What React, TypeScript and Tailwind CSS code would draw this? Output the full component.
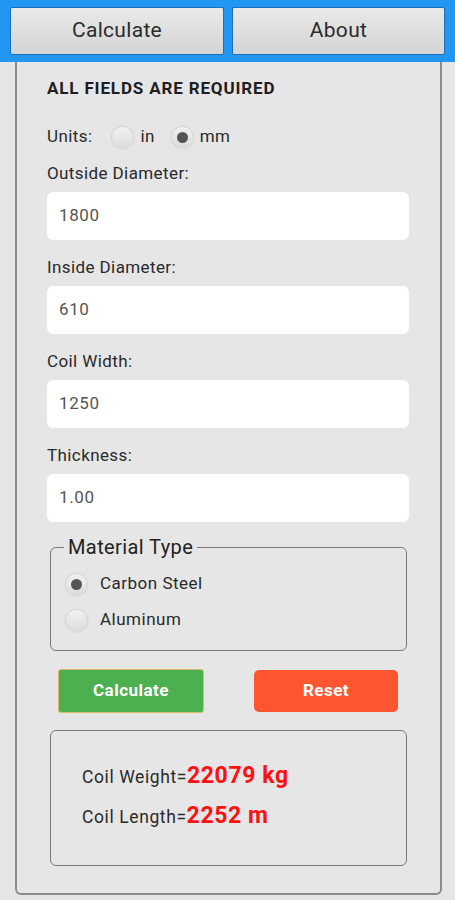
import React from "react";

function Radio({ checked }: { checked?: boolean }) {
  return (
    <span className="w-[23px] h-[23px] rounded-full bg-gradient-to-b from-[#f2f2f2] to-[#dcdcdc] border border-[#d6d6d6] shadow-[0_0_2px_rgba(0,0,0,0.08)] flex items-center justify-center shrink-0">
      {checked && <span className="w-[11px] h-[11px] rounded-full bg-[#555555]" />}
    </span>
  );
}

function Field({ label, value, first }: { label: string; value: string; first?: boolean }) {
  return (
    <div className={first ? "mt-[14px]" : "mt-[17px]"}>
      <div className="text-[17px] leading-[20px] tracking-[0.4px] text-[#2a2a2a]">{label}</div>
      <div className="mt-[9px] h-[48px] w-[362px] bg-white rounded-md flex items-center pl-[12px] text-[17px] tracking-[0.6px] text-[#555555]">
        {value}
      </div>
    </div>
  );
}

export default function App() {
  return (
    <div className="w-[455px] h-[900px] bg-[#e6e6e6] overflow-hidden font-['Roboto',sans-serif]">
      <div className="h-[62px] bg-[#2196f3] flex gap-[8px] pl-[10px] pt-[7px]">
        <div className="w-[214px] h-[48px] bg-gradient-to-b from-[#eaeaea] to-[#d4d4d4] border border-[#1c6fb8] rounded-[2px] flex items-center justify-center text-[21px] tracking-[0.3px] text-[#2b2b2b]">
          Calculate
        </div>
        <div className="w-[213px] h-[48px] bg-gradient-to-b from-[#eaeaea] to-[#d4d4d4] border border-[#1c6fb8] rounded-[2px] flex items-center justify-center text-[21px] tracking-[0.3px] text-[#2b2b2b]">
          About
        </div>
      </div>
      <div className="ml-[15px] w-[427px] h-[833px] border-x-2 border-b-2 border-[#8c8c8c] rounded-b-[6px] px-[30px] pt-[16px]">
        <div className="text-[17px] leading-[20px] font-bold tracking-[0.85px] text-[#1e1e1e] whitespace-nowrap">ALL FIELDS ARE REQUIRED</div>
        <div className="mt-[27px] h-[24px] flex items-center text-[17px] tracking-[0.4px] text-[#2a2a2a]">
          <span>Units:</span>
          <span className="ml-[19px]"><Radio /></span>
          <span className="ml-[6px]">in</span>
          <span className="ml-[16px]"><Radio checked /></span>
          <span className="ml-[6px]">mm</span>
        </div>
        <Field label="Outside Diameter:" value="1800" first />
        <Field label="Inside Diameter:" value="610" />
        <Field label="Coil Width:" value="1250" />
        <Field label="Thickness:" value="1.00" />
        <fieldset className="mt-[14px] ml-[3px] w-[357px] h-[115px] border border-[#7a7a7a] rounded-[6px] px-[13px] pb-0">
          <legend className="px-[4px] text-[20px] leading-[22px] tracking-[0.4px] text-[#222222]">Material Type</legend>
          <div className="ml-[1px] mt-[11px] h-[30px] flex items-center text-[17px] tracking-[0.5px] text-[#2a2a2a]">
            <Radio checked />
            <span className="ml-[12px]">Carbon Steel</span>
          </div>
          <div className="ml-[1px] mt-[6px] h-[30px] flex items-center text-[17px] tracking-[0.5px] text-[#2a2a2a]">
            <Radio />
            <span className="ml-[12px]">Aluminum</span>
          </div>
        </fieldset>
        <div className="mt-[18px] flex justify-between pl-[11px] pr-[12px]">
          <div className="w-[146px] h-[44px] bg-[#4caf50] border border-[#d9b96a] rounded-[3px] flex items-center justify-center text-white font-bold text-[17px] tracking-[0.5px]">
            Calculate
          </div>
          <div className="w-[144px] h-[42px] mt-[1px] bg-[#ff5530] rounded-[5px] flex items-center justify-center text-white font-bold text-[17px] tracking-[0.5px]">
            Reset
          </div>
        </div>
        <div className="mt-[17px] ml-[3px] w-[357px] h-[136px] border border-[#7a7a7a] rounded-[6px] pl-[31px] pt-[28px]">
          <div className="h-[28px] flex items-baseline text-[17.5px] tracking-[0.6px] text-[#2a2a2a]">
            <span>Coil Weight=</span>
            <span className="text-[23px] font-bold tracking-[0.6px] text-[#ff1010]">22079 kg</span>
          </div>
          <div className="mt-[12px] h-[28px] flex items-baseline text-[17.5px] tracking-[0.6px] text-[#2a2a2a]">
            <span>Coil Length=</span>
            <span className="text-[23px] font-bold tracking-[0.6px] text-[#ff1010]">2252 m</span>
          </div>
        </div>
      </div>
    </div>
  );
}
